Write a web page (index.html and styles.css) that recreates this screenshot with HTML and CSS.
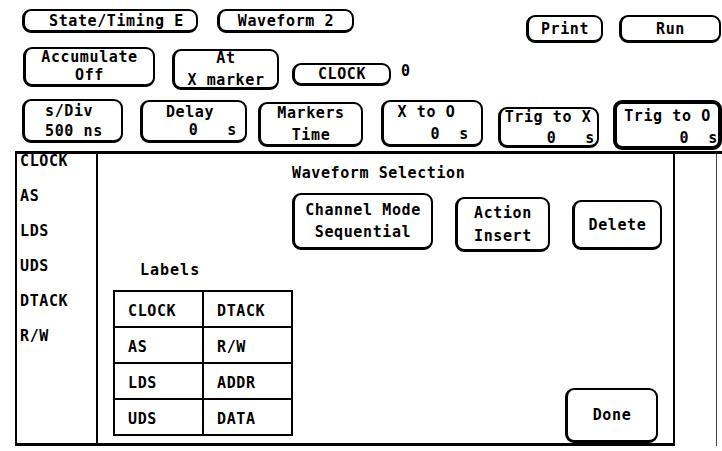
FILE: index.html
```html
<!DOCTYPE html>
<html lang="en">
<head>
    <meta charset="UTF-8">
    <meta name="viewport" content="width=device-width, initial-scale=1.0">
    <title>Waveform Selection</title>
    <link rel="stylesheet" href="styles.css">
</head>
<body>
    <div class="screen">
        <div class="header">
            <div class="row row-menu">
                <div class="key key-mode">State/Timing E</div>
                <div class="key key-wave">Waveform 2</div>
                <div class="key key-print">Print</div>
                <div class="key key-run">Run</div>
            </div>
            <div class="row row-setup">
                <div class="key key-accum"><span>Accumulate</span><span>Off</span></div>
                <div class="key key-at"><span>At</span><span>X marker</span></div>
                <div class="key key-clock">CLOCK</div>
                <div class="readout">0</div>
            </div>
            <div class="row row-scale">
                <div class="key key-time key-sdiv"><span>s/Div</span><span>500 ns</span></div>
                <div class="key key-time key-delay"><span>Delay</span><span class="val">0   s</span></div>
                <div class="key key-time key-markers"><span>Markers</span><span>Time</span></div>
                <div class="key key-time key-xo"><span>X to O</span><span class="val">0  s</span></div>
                <div class="key key-time key-tx"><span>Trig to X</span><span class="val">0   s</span></div>
                <div class="key key-time key-to"><span>Trig to O</span><span class="val">0  s</span></div>
            </div>
        </div>

        <div class="panel">
            <div class="signals">
                <div>CLOCK</div>
                <div>AS</div>
                <div>LDS</div>
                <div>UDS</div>
                <div>DTACK</div>
                <div>R/W</div>
            </div>

            <div class="editor">
                <div class="editor-title">Waveform Selection</div>
                <div class="editor-actions">
                    <div class="key key-channel"><span>Channel Mode</span><span>Sequential</span></div>
                    <div class="key key-action"><span>Action</span><span>Insert</span></div>
                    <div class="key key-delete">Delete</div>
                </div>
                <div class="editor-bottom">
                    <div class="labels">
                        <div class="labels-title">Labels</div>
                        <div class="labels-grid">
                            <div>CLOCK</div><div>DTACK</div>
                            <div>AS</div><div>R/W</div>
                            <div>LDS</div><div>ADDR</div>
                            <div>UDS</div><div>DATA</div>
                        </div>
                    </div>
                    <div class="key key-done">Done</div>
                </div>
            </div>

            <div class="strip"></div>
        </div>
    </div>
</body>
</html>
```

FILE: styles.css
```css
body {
    margin: 0;
    background: #fff;
    color: #000;
    font-family: 'DejaVu Sans Mono', 'Liberation Mono', monospace;
    font-size: 15px;
    font-weight: bold;
    letter-spacing: 0.6px;
}

.screen {
    width: 722px;
    height: 451px;
    overflow: hidden;
}

/* top softkey rows */
.header {
    padding-top: 9px;
}

.row {
    display: flex;
    align-items: flex-start;
}

.row-menu {
    height: 38px;
    padding-left: 22px;
}

.row-setup {
    height: 52px;
    padding-left: 23px;
}

.row-scale {
    height: 52px;
    padding-left: 22px;
}

.key {
    box-sizing: border-box;
    display: flex;
    flex-direction: column;
    justify-content: center;
    align-items: center;
    border: 2px solid #000;
    border-left-width: 3px;
    border-bottom-width: 3px;
    border-radius: 9px;
    line-height: 16px;
    white-space: pre;
}

.key-mode {
    width: 176px;
    height: 24px;
    padding-left: 12px;
}

.key-wave {
    width: 137px;
    height: 24px;
    margin-left: 19px;
}

.key-print {
    width: 77px;
    height: 28px;
    margin-left: 172px;
    margin-top: 6px;
}

.key-run {
    width: 102px;
    height: 28px;
    margin-left: 16px;
    margin-top: 6px;
}

.key-accum {
    width: 132px;
    height: 40px;
    line-height: 17px;
    gap: 1px;
}

.key-at {
    width: 107px;
    height: 41px;
    margin-left: 17px;
    margin-top: 2px;
    gap: 6px;
}

.key-clock {
    width: 99px;
    height: 23px;
    margin-left: 13px;
    margin-top: 16px;
}

.readout {
    margin-left: 10px;
    margin-top: 16px;
    line-height: 16px;
}

.key-time {
    gap: 6px;
}

.key-time .val {
    align-self: flex-end;
}

.key-sdiv {
    width: 101px;
    height: 44px;
    align-items: flex-start;
    padding-left: 20px;
    gap: 4px;
}

.key-delay {
    width: 107px;
    height: 43px;
    margin-left: 17px;
    margin-top: 1px;
    padding-right: 8px;
    gap: 2px;
}

.key-markers {
    width: 105px;
    height: 45px;
    margin-left: 11px;
    margin-top: 3px;
}

.key-xo {
    width: 102px;
    height: 47px;
    margin-left: 18px;
    margin-top: 1px;
    padding-right: 12px;
}

.key-tx {
    width: 101px;
    height: 41px;
    margin-left: 15px;
    margin-top: 8px;
    padding-right: 2px;
    gap: 5px;
}

.key-to {
    width: 109px;
    height: 50px;
    margin-left: 14px;
    margin-top: 1px;
    border-width: 4px;
    padding-right: 0;
    padding-top: 4px;
}

/* lower panel */
.panel {
    box-sizing: border-box;
    display: flex;
    height: 295px;
    margin-left: 15px;
    border-top: 3px solid #000;
}

.signals {
    box-sizing: border-box;
    width: 83px;
    display: flex;
    flex-direction: column;
    gap: 27px;
    padding: 3px 0 0 3px;
    line-height: 8px;
    border-left: 2px solid #000;
    border-right: 2px solid #000;
    border-bottom: 3px solid #000;
}

.editor {
    box-sizing: border-box;
    width: 577px;
    display: flex;
    flex-direction: column;
    border-right: 2px solid #000;
    border-bottom: 3px solid #000;
}

.editor-title {
    margin: 11px 0 0 194px;
    line-height: 16px;
}

.editor-actions {
    display: flex;
    align-items: flex-start;
    height: 57px;
    margin: 12px 0 0 194px;
}

.key-channel {
    width: 141px;
    height: 57px;
    gap: 6px;
}

.key-action {
    width: 95px;
    height: 55px;
    margin-left: 22px;
    margin-top: 4px;
    gap: 7px;
}

.key-delete {
    width: 90px;
    height: 50px;
    margin-left: 22px;
    margin-top: 7px;
}

.editor-bottom {
    flex: 1;
    display: flex;
    align-items: flex-start;
}

.labels {
    margin-left: 15px;
}

.labels-title {
    margin-top: 12px;
    padding-left: 27px;
    line-height: 16px;
    letter-spacing: 1px;
}

.labels-grid {
    display: grid;
    grid-template-columns: 87px 87px;
    grid-auto-rows: 34px;
    gap: 2px;
    padding: 2px;
    margin-top: 12px;
    background: #000;
}

.labels-grid div {
    display: flex;
    align-items: center;
    padding-left: 13px;
    padding-top: 3px;
    background: #fff;
}

.key-done {
    align-self: flex-end;
    width: 93px;
    height: 55px;
    margin-left: 272px;
}

.strip {
    width: 41px;
    border-right: 1px solid #444;
}
```
